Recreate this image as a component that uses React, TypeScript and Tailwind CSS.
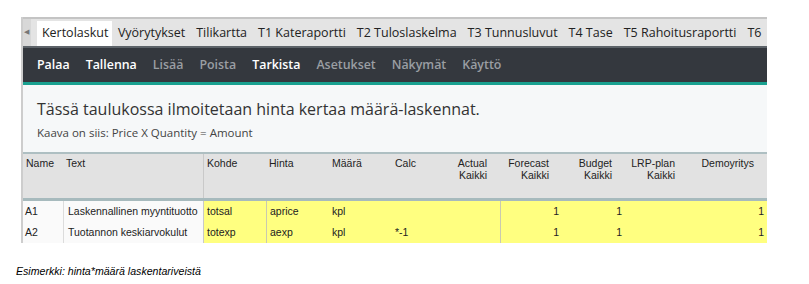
import React from 'react';

const tabs = [
  'Kertolaskut',
  'Vyörytykset',
  'Tilikartta',
  'T1 Kateraportti',
  'T2 Tuloslaskelma',
  'T3 Tunnusluvut',
  'T4 Tase',
  'T5 Rahoitusraportti',
  'T6',
];

const actions = [
  { label: 'Palaa', on: true },
  { label: 'Tallenna', on: true },
  { label: 'Lisää', on: false },
  { label: 'Poista', on: false },
  { label: 'Tarkista', on: true },
  { label: 'Asetukset', on: false },
  { label: 'Näkymät', on: false },
  { label: 'Käyttö', on: false },
];

const cols = 'grid grid-cols-[40px_140px_63px_63px_63px_45px_63px_62px_63px_63px_79px]';

const headers: { top: string; sub?: string; right?: boolean }[] = [
  { top: 'Name' },
  { top: 'Text' },
  { top: 'Kohde' },
  { top: 'Hinta' },
  { top: 'Määrä' },
  { top: 'Calc' },
  { top: 'Actual', sub: 'Kaikki', right: true },
  { top: 'Forecast', sub: 'Kaikki', right: true },
  { top: 'Budget', sub: 'Kaikki', right: true },
  { top: 'LRP-plan', sub: 'Kaikki', right: true },
  { top: 'Demoyritys', right: true },
];

const rows = [
  { name: 'A1', text: 'Laskennallinen myyntituotto', kohde: 'totsal', hinta: 'aprice', maara: 'kpl', calc: '' },
  { name: 'A2', text: 'Tuotannon keskiarvokulut', kohde: 'totexp', hinta: 'aexp', maara: 'kpl', calc: '*-1' },
];

export default function App() {
  return (
    <div className="w-[809px] h-[284px] bg-white overflow-hidden font-['Open_Sans',sans-serif]">
      <div className="ml-[21px] mt-[17px] w-[746px] border-l-2 border-[#cdcdcd]">
        {/* tab strip */}
        <div className="h-[29px] bg-[#e4e4e4] border-t-2 border-[#c4c4c4] flex items-end overflow-hidden">
          <div className="w-[11px] h-full bg-[#d8d8d8] flex items-center justify-center text-[7px] text-[#777]">◀</div>
          <div className="flex ml-[6px] text-[12.5px] text-[#222] leading-none">
            {tabs.map((t, i) => (
              <div
                key={t}
                className={`px-[5.5px] h-[25px] flex items-center whitespace-nowrap ${i === 0 ? 'bg-white pl-[5px] pr-[4px]' : ''}`}
              >
                {t}
              </div>
            ))}
          </div>
        </div>

        {/* toolbar */}
        <div className="h-[39px] bg-[#34383e] border-t-2 border-[#5d6369] border-b-[3px] border-b-[#19a190] flex items-center pl-[14px] gap-[16px] text-[12.4px] font-semibold">
          {actions.map(a => (
            <span key={a.label} className={a.on ? 'text-white' : 'text-[#9a9ea3]'}>
              {a.label}
            </span>
          ))}
        </div>

        {/* intro */}
        <div className="h-[67px] bg-[#f6f8f9] pl-[14px] pt-[13px] text-[#333]">
          <div className="text-[16px] leading-[22px]">Tässä taulukossa ilmoitetaan hinta kertaa määrä-laskennat.</div>
          <div className="text-[11.5px] leading-[16px] mt-[5px] text-[#444]">Kaava on siis: Price X Quantity = Amount</div>
        </div>

        {/* grid */}
        <div className="text-[10.5px] text-[#222] font-['Liberation_Sans',sans-serif]">
          <div className={`${cols} h-[49px] bg-[#e2e2e2] border-t-2 border-[#aebfc2] border-b-[3px] border-b-[#a7babd]`}>
            {headers.map((h, i) => (
              <div
                key={h.top}
                className={`pt-[4px] leading-[11.5px] ${h.right ? 'text-right pr-[13px]' : 'pl-[3px]'} ${i === 2 ? 'border-l border-[#c9c9c9]' : ''}`}
              >
                <div>{h.top}</div>
                {h.sub && <div>{h.sub}</div>}
              </div>
            ))}
          </div>
          {rows.map(r => (
            <div key={r.name} className={`${cols} h-[21px] leading-[21px] whitespace-nowrap`}>
              <div className="bg-[#fafafa] pl-[2px]">{r.name}</div>
              <div className="bg-[#fafafa] pl-[4px] border-l border-[#dcdcdc]">{r.text}</div>
              <div className="bg-[#ffff80] pl-[3px] border-l border-[#c9c9c9]">{r.kohde}</div>
              <div className="bg-[#ffff80] pl-[3px] border-l border-[#c9c9b0]">{r.hinta}</div>
              <div className="bg-[#ffff80] pl-[3px]">{r.maara}</div>
              <div className="bg-[#ffff80] pl-[3px]">{r.calc}</div>
              <div className="bg-[#ffff80]"></div>
              <div className="bg-[#ffff80] text-right pr-[3px] border-l border-[#c9c9b0]">1</div>
              <div className="bg-[#ffff80] text-right pr-[3px]">1</div>
              <div className="bg-[#ffff80]"></div>
              <div className="bg-[#ffff80] text-right pr-[3px]">1</div>
            </div>
          ))}
        </div>
      </div>

      <div className="ml-[16px] mt-[21px] text-[10.6px] italic font-['Liberation_Sans',sans-serif] text-black">
        Esimerkki: hinta*määrä laskentariveistä
      </div>
    </div>
  );
}
